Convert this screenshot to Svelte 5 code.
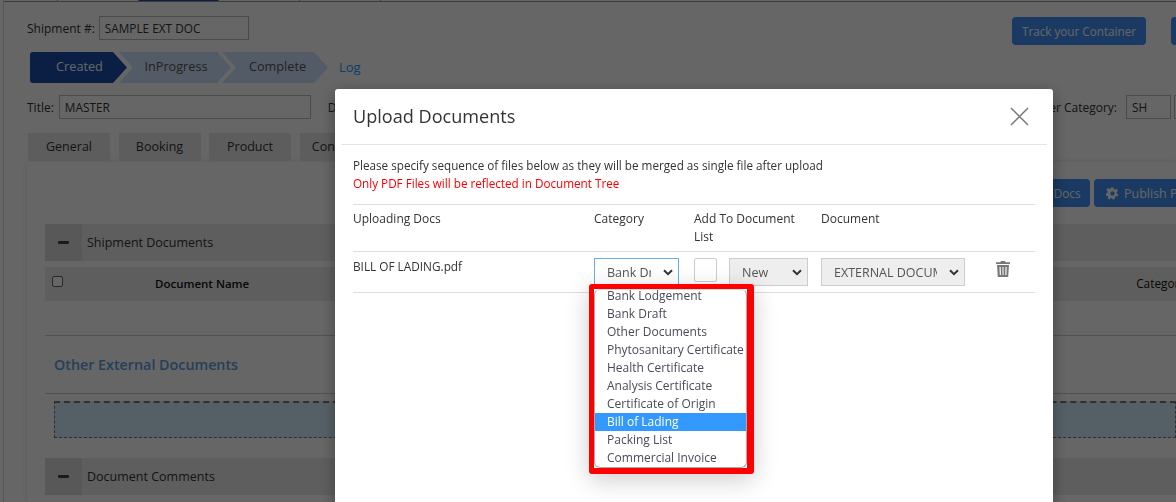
<script lang="ts">
  const topTabs = [54, 81, 80, 81, 81];
  const pageTabs = ["General", "Booking", "Product", "Container"];
  const categories = [
    "Bank Lodgement",
    "Bank Draft",
    "Other Documents",
    "Phytosanitary Certificate",
    "Health Certificate",
    "Analysis Certificate",
    "Certificate of Origin",
    "Bill of Lading",
    "Packing List",
    "Commercial Invoice",
  ];
</script>

{#snippet chevron()}
  <svg class="chevron" width="10" height="7" viewBox="0 0 10 7"><path d="M1 1.2 5 5.2 9 1.2" fill="none" stroke="#333" stroke-width="2" /></svg>
{/snippet}

<div class="page">
  <div class="topstrip">
    {#each topTabs as w, i}
      <span class="toptab" class:active={i === 2} style="width:{w}px"></span>
    {/each}
  </div>

  <div class="head">
    <div class="head-left">
      <div class="row ship">
        <span class="lbl">Shipment #:</span>
        <span class="field ship-field">SAMPLE EXT DOC</span>
      </div>
      <div class="steps">
        <span class="step first">Created</span>
        <span class="step second">InProgress</span>
        <span class="step third">Complete</span>
        <span class="log">Log</span>
      </div>
    </div>
    <div class="head-right">
      <span class="btn track">Track your Container</span>
      <span class="btn stub"></span>
    </div>
  </div>

  <div class="row title-row">
    <span class="lbl">Title:</span>
    <span class="field title-field">MASTER</span>
    <span class="lbl d">D</span>
    <span class="lbl cat">Master Category:</span>
    <span class="field sh">SH</span>
    <span class="field sh2"></span>
  </div>

  <div class="tabs">
    {#each pageTabs as t}
      <span class="tab">{t}</span>
    {/each}
  </div>

  <div class="card">
    <div class="actions">
      <span class="btn docs">Upload Docs</span>
      <span class="btn publish">
        <svg width="13" height="13" viewBox="0 0 24 24"><path fill="#fff" fill-rule="evenodd" d="M14 1l.6 3.2 2 .9L19.400 3.300 22 7l-2.400 2.200.1 2.800 2.900 1.300-1.400 4.300-3.200-.5-1.700 1.800.4 3.200-4.400 1-1.300-3h-2.400l-1.300 3-4.100-1.800.8-3.100-1.600-1.900-3.200.3L-.1 12l2.800-1.600.3-2.400L.5 5.600 3.400 2l2.900 1.500 2.100-1L9.500 1zM12 8a4 4 0 1 0 0 8 4 4 0 0 0 0-8z" /></svg>
        Publish Package
      </span>
    </div>

    <div class="section-bar">
      <span class="minus"><i></i></span>
      <span>Shipment Documents</span>
    </div>
    <div class="thead">
      <span class="check"></span>
      <span class="th-name">Document Name</span>
      <span class="th-cat">Category</span>
    </div>
    <div class="other-title">Other External Documents</div>
    <div class="dropzone"></div>
    <div class="section-bar comments">
      <span class="minus"><i></i></span>
      <span>Document Comments</span>
    </div>
  </div>
</div>

<div class="backdrop"></div>

<div class="modal">
  <div class="modal-head">
    <h2>Upload Documents</h2>
    <svg width="19" height="19" viewBox="0 0 19 19"><path d="M1 1 18 18M18 1 1 18" stroke="#777" stroke-width="1.500" fill="none" /></svg>
  </div>
  <div class="modal-body">
    <p class="hint">Please specify sequence of files below as they will be merged as single file after upload</p>
    <p class="warn">Only PDF Files will be reflected in Document Tree</p>
    <div class="grid grid-head">
      <span>Uploading Docs</span>
      <span>Category</span>
      <span class="wrap">Add To Document List</span>
      <span>Document</span>
    </div>
    <div class="grid grid-row">
      <span class="filename">BILL OF LADING.pdf</span>
      <div class="select focus"><span>Bank Draft</span>{@render chevron()}</div>
      <div class="add">
        <span class="box"></span>
        <div class="select off new"><span>New</span>{@render chevron()}</div>
      </div>
      <div class="select off doc"><span>EXTERNAL DOCUMENT</span>{@render chevron()}</div>
      <svg class="trash" width="14" height="16" viewBox="0 0 14 16"><path fill="#777" d="M5 0h4l.6 1.200H14v1.900H0V1.200h4.400zM1 4h12l-.8 12H1.800zm2.500 2 .3 8h1.100l-.2-8zm3 0v8h1V6zm3 0-.2 8h1.100l.3-8z" /></svg>
    </div>
  </div>
</div>

<div class="dropdown">
  <ul>
    {#each categories as c}
      <li class:sel={c === "Bill of Lading"}>{c}</li>
    {/each}
  </ul>
</div>

<style>
  :global(body) {
    margin: 0;
    height: 502px;
    overflow: hidden;
    background: #fff;
    font-family: "Open Sans", "Liberation Sans", sans-serif;
    font-size: 12px;
    color: #333;
  }

  .page {
    box-sizing: border-box;
    width: 1173px;
    height: 502px;
    margin-left: 3px;
    padding-left: 23px;
    border-left: 1px solid #ddd;
    overflow: hidden;
  }

  .topstrip {
    display: flex;
    box-sizing: border-box;
    height: 2px;
    margin-left: -23px;
    border-bottom: 1px solid #999;
  }
  .toptab {
    box-sizing: border-box;
    height: 1px;
    border-right: 1px solid #999;
  }
  .toptab.active {
    background: #1c4eaa;
  }

  .head {
    display: flex;
    justify-content: space-between;
    height: 82px;
  }
  .row {
    display: flex;
    align-items: center;
  }
  .ship {
    margin-top: 14px;
    gap: 4px;
  }
  .lbl {
    color: #333;
    font-weight: 500;
    font-size: 12px;
  }
  .field {
    box-sizing: border-box;
    height: 24px;
    border: 1px solid #bbb;
    padding: 0 5px;
    line-height: 22px;
    font-size: 11.800px;
    background: #fff;
  }
  .ship-field {
    width: 150px;
  }

  .steps {
    display: flex;
    align-items: center;
    margin: 12px 0 0 3px;
    height: 31px;
  }
  .step {
    height: 31px;
    line-height: 29px;
    font-size: 12.700px;
    text-align: center;
    box-sizing: border-box;
    color: #555;
    background: #cfe6ff;
    clip-path: polygon(0 0, calc(100% - 14px) 0, 100% 50%, calc(100% - 14px) 100%, 0 100%, 14px 50%);
  }
  .first {
    width: 97px;
    padding-left: 2px;
    color: #fff;
    background: #1c4eaa;
    border-radius: 3px 0 0 3px;
    clip-path: polygon(0 0, calc(100% - 14px) 0, 100% 50%, calc(100% - 14px) 100%, 0 100%);
  }
  .second {
    width: 112px;
    margin-left: -8px;
    padding-left: 2px;
  }
  .third {
    width: 106px;
    margin-left: -9px;
    padding-left: 5px;
  }
  .log {
    margin: 0 0 2px 11px;
    font-size: 13px;
    color: #2a9bff;
  }

  .head-right {
    display: flex;
    gap: 25px;
    margin-top: 15px;
    height: 28px;
  }
  .btn {
    box-sizing: border-box;
    display: inline-flex;
    align-items: center;
    gap: 5px;
    background: #4191f7;
    color: #fff;
    border-radius: 4px;
    white-space: nowrap;
    font-size: 12px;
  }
  .track {
    width: 134px;
    justify-content: center;
    font-size: 11.700px;
  }
  .stub {
    width: 20px;
    margin-right: -15px;
  }

  .title-row {
    margin-top: 11px;
    height: 24px;
  }
  .title-field {
    width: 252px;
    margin-left: 5px;
  }
  .d {
    margin-left: 17px;
  }
  .cat {
    margin-left: auto;
    margin-right: 9px;
  }
  .sh {
    width: 45px;
  }
  .sh2 {
    width: 30px;
    margin-left: 3px;
    margin-right: -28px;
  }

  .tabs {
    display: flex;
    gap: 8.500px;
    margin: 14px 0 0 1px;
    height: 28px;
  }
  .tab {
    width: 82px;
    background: #e9e9e9;
    text-align: center;
    line-height: 27px;
    font-size: 12.500px;
  }

  .card {
    margin-top: 1px;
    height: 340px;
    padding-left: 18px;
    box-shadow: 0 0 6px rgba(0, 0, 0, 0.12);
  }
  .actions {
    display: flex;
    justify-content: flex-end;
    gap: 4px;
    padding-top: 17px;
    height: 28px;
    margin-right: -60px;
  }
  .docs {
    width: 88px;
    justify-content: center;
    font-size: 11.700px;
  }
  .publish {
    width: 142px;
    padding-left: 12px;
    font-size: 12.500px;
  }

  .section-bar {
    display: flex;
    align-items: center;
    margin-top: 17px;
    height: 37px;
    background: #ececec;
    font-size: 12.500px;
    gap: 5px;
  }
  .minus {
    display: flex;
    align-items: center;
    justify-content: center;
    width: 37px;
    height: 37px;
    background: #dcdcdc;
  }
  .minus i {
    display: block;
    width: 11px;
    height: 3px;
    border-radius: 1px;
    background: #444;
  }

  .thead {
    display: flex;
    align-items: center;
    box-sizing: border-box;
    margin-top: 6px;
    padding-bottom: 2px;
    height: 34px;
    background: #ececec;
    font-weight: 600;
    color: #111;
    white-space: nowrap;
  }
  .check {
    flex: none;
    box-sizing: border-box;
    width: 11px;
    height: 11px;
    margin: 0 0 3px 7px;
    border: 1px solid #666;
    border-radius: 2px;
    background: #fff;
  }
  .th-name {
    flex: none;
    margin-left: 92px;
    font-size: 11.500px;
  }
  .th-cat {
    flex: none;
    margin-left: 887px;
    font-size: 11.800px;
    font-weight: 500;
  }

  .other-title {
    margin-top: 34px;
    height: 59px;
    box-sizing: border-box;
    line-height: 58px;
    padding-left: 9px;
    border-top: 1px solid #ccc;
    border-bottom: 1px solid #ccc;
    font-size: 14.300px;
    font-weight: 600;
    color: #5b9fe0;
  }
  .dropzone {
    box-sizing: border-box;
    margin: 7px 0 0 9px;
    height: 37px;
    background: #d5f0ff;
    border: 1px dashed #777;
    border-top-width: 2px;
  }
  .comments {
    margin-top: 20px;
  }

  .backdrop {
    position: fixed;
    inset: 0;
    background: rgba(0, 0, 0, 0.6);
  }

  .modal {
    position: fixed;
    left: 335px;
    top: 89px;
    width: 718px;
    height: 440px;
    box-sizing: border-box;
    padding: 0 6px;
    background: #fff;
    border-radius: 3px 3px 0 0;
    box-shadow: 0 4px 16px rgba(0, 0, 0, 0.35);
  }
  .modal-head {
    display: flex;
    align-items: center;
    justify-content: space-between;
    height: 55px;
    padding: 0 18px 0 12px;
    border-bottom: 1px solid #e5e5e5;
  }
  h2 {
    margin: 0 0 2px;
    font-size: 18.100px;
    font-weight: 500;
    color: #333;
  }
  .modal-body {
    padding: 11px 12px 0;
  }
  .hint,
  .warn {
    margin: 0;
    line-height: 18px;
    font-size: 11.700px;
    color: #333;
  }
  .warn {
    color: #f00;
  }
  .grid {
    display: grid;
    grid-template-columns: 241px 100px 127px 175px 1fr;
    width: 682px;
    font-size: 12px;
  }
  .grid-head {
    margin-top: 12px;
    height: 48px;
    padding-top: 5px;
    box-sizing: border-box;
    border-top: 1px solid #ddd;
    border-bottom: 1px solid #ddd;
    line-height: 18px;
  }
  .wrap {
    padding-right: 16px;
  }
  .grid-row {
    height: 41px;
    box-sizing: border-box;
    padding-top: 6px;
    border-bottom: 1px solid #ddd;
  }
  .filename {
    line-height: 16px;
    font-size: 11.800px;
  }

  .select {
    box-sizing: border-box;
    display: flex;
    align-items: center;
    height: 28px;
    width: 85px;
    padding: 0 5px 0 12px;
    border: 1px solid #ccc;
    font-size: 12.500px;
    color: #555;
    background: #fff;
  }
  .select span {
    flex: 1;
    overflow: hidden;
    white-space: nowrap;
  }
  .chevron {
    margin-left: 12px;
    flex: none;
  }
  .focus {
    border-color: #66afe9;
  }
  .off {
    background: #eee;
  }
  .add {
    display: flex;
    gap: 12px;
    align-items: flex-start;
  }
  .box {
    box-sizing: border-box;
    width: 23px;
    height: 24px;
    border: 1px solid #ccc;
    border-radius: 2px;
  }
  .new {
    width: 79px;
  }
  .doc {
    width: 144px;
  }
  .trash {
    margin-top: 3px;
  }

  .dropdown {
    position: fixed;
    left: 589px;
    top: 284px;
    width: 165px;
    height: 190px;
    box-sizing: border-box;
    border-style: solid;
    border-color: #f00;
    border-width: 5px 7px 6px 5px;
    border-radius: 3px;
    box-shadow: 0 6px 24px rgba(0, 0, 0, 0.2);
    background: #fff;
  }
  ul {
    list-style: none;
    margin: 0;
    padding: 0;
    height: 100%;
    box-sizing: border-box;
    border: 1px solid #aaa;
    border-top-color: #ddd;
    border-radius: 6px;
    overflow: hidden;
  }
  li {
    height: 18px;
    line-height: 17px;
    padding-left: 12px;
    font-size: 12px;
    white-space: nowrap;
    color: #4a4a5a;
  }
  li:first-child {
    margin-top: -3px;
  }
  .sel {
    background: #3399ff;
    color: #fff;
  }
</style>
